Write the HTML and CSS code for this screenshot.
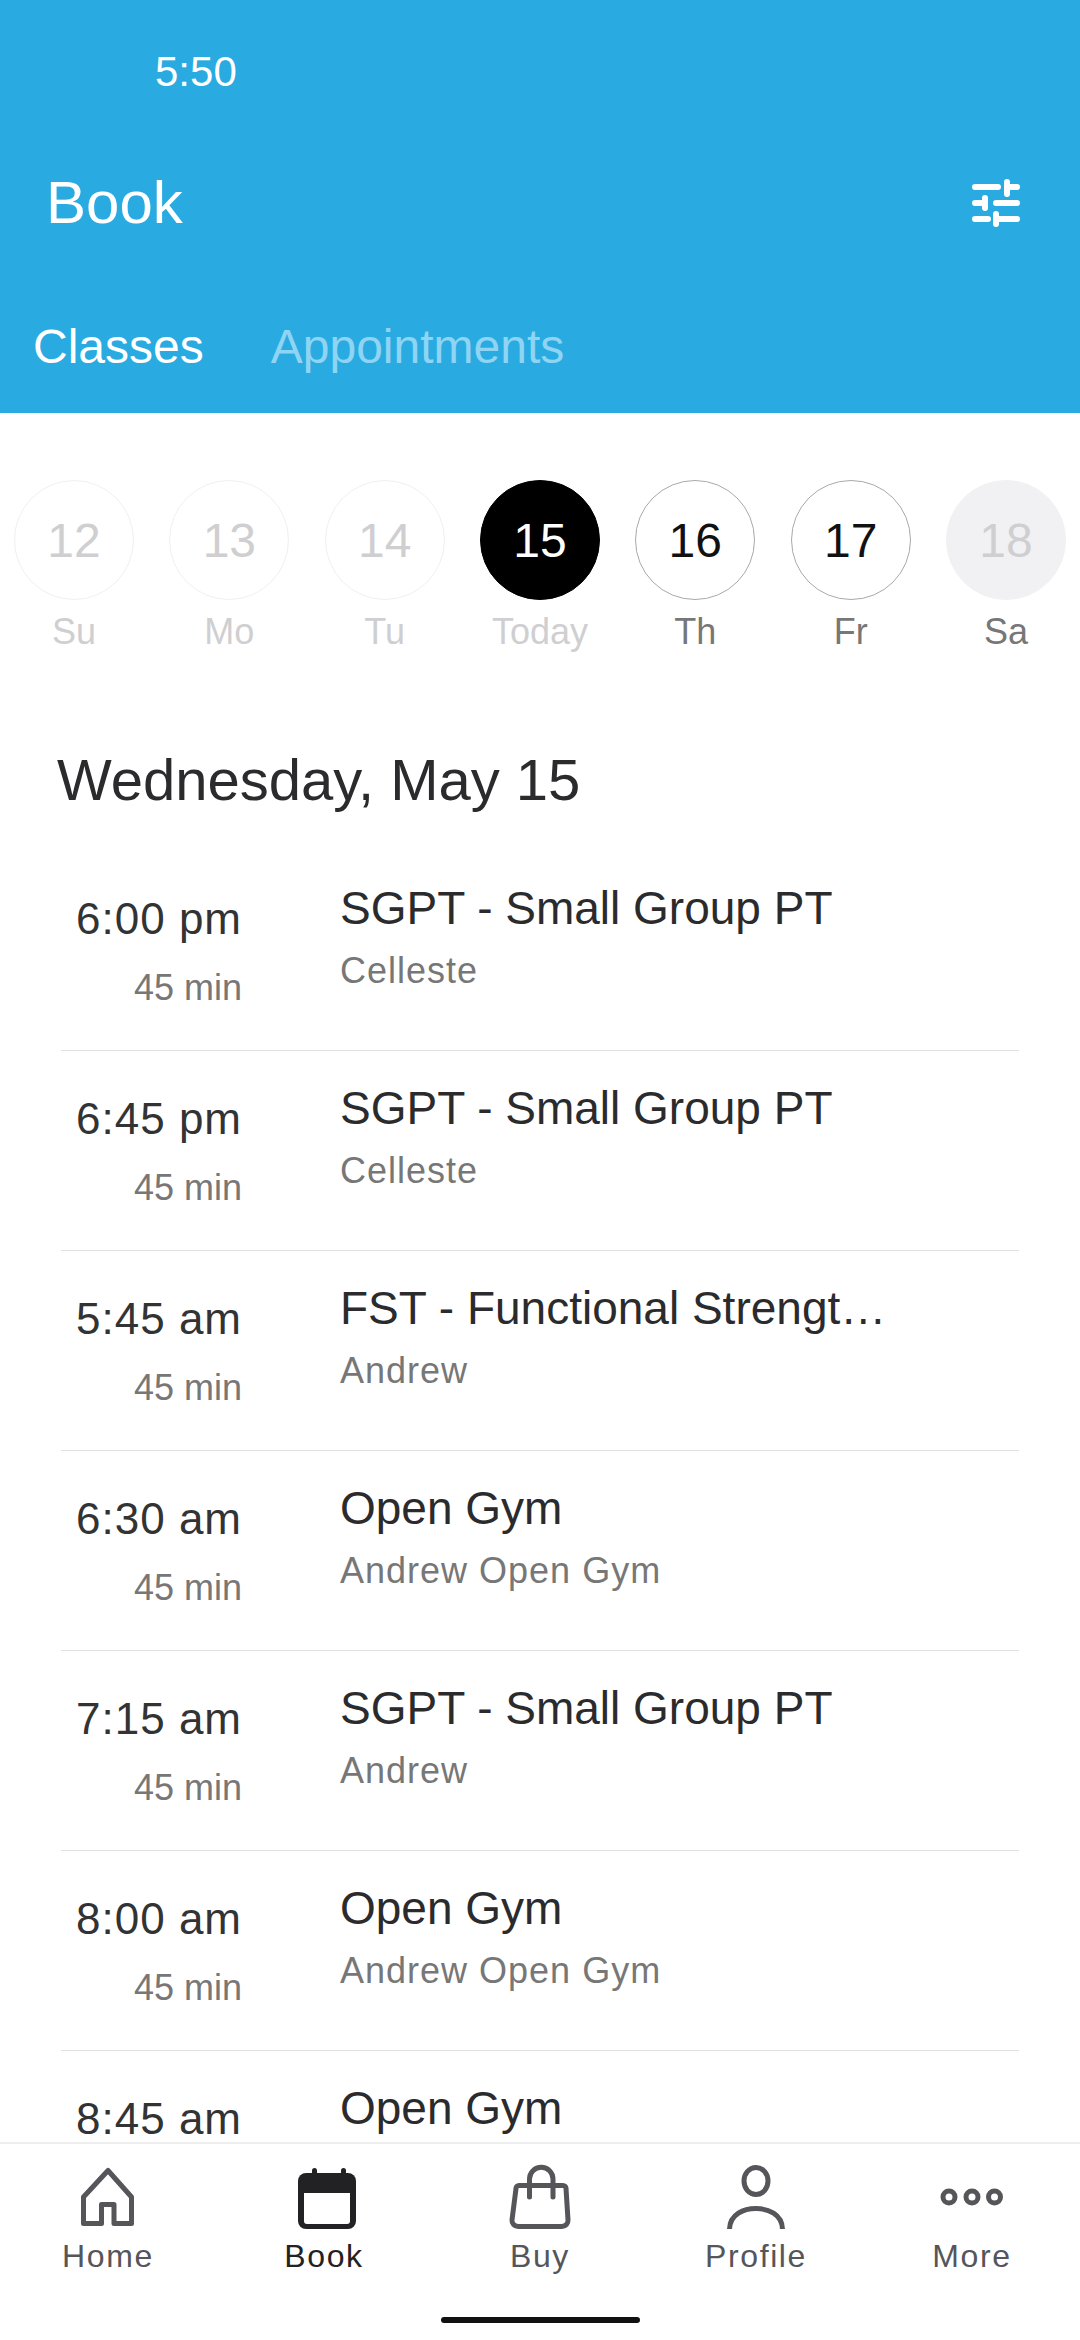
FILE: index.html
```html
<!DOCTYPE html>
<html lang="en">
<head>
<meta charset="utf-8">
<title>Book</title>
<link rel="stylesheet" href="styles.css">
</head>
<body>
<div class="app">
  <header class="header">
    <div class="status">5:50</div>
    <div class="titlebar">
      <h1 class="title">Book</h1>
      <svg class="filter" width="48" height="48" viewBox="0 0 48 48" fill="none" stroke="#fff" stroke-width="6" stroke-linecap="round">
        <path d="M3 8H26M35 3V15M35 8H45M3 24H10M13 19V29M24 24H45M3 40H16M24 35V45M24 40H45"/>
      </svg>
    </div>
    <nav class="tabs"><span class="tab active">Classes</span><span class="tab">Appointments</span></nav>
  </header>
  <section class="days">
    <div class="day past"><span class="circle">12</span><span class="dlabel">Su</span></div>
    <div class="day past"><span class="circle">13</span><span class="dlabel">Mo</span></div>
    <div class="day past"><span class="circle">14</span><span class="dlabel">Tu</span></div>
    <div class="day today"><span class="circle">15</span><span class="dlabel">Today</span></div>
    <div class="day"><span class="circle">16</span><span class="dlabel">Th</span></div>
    <div class="day"><span class="circle">17</span><span class="dlabel">Fr</span></div>
    <div class="day off"><span class="circle">18</span><span class="dlabel">Sa</span></div>
  </section>
  <h2 class="date">Wednesday, May 15</h2>
  <main class="list">
    <div class="row"><div class="time"><span class="t">6:00 pm</span><span class="d">45 min</span></div><div class="info"><span class="name">SGPT - Small Group PT</span><span class="who">Celleste</span></div></div>
    <div class="row"><div class="time"><span class="t">6:45 pm</span><span class="d">45 min</span></div><div class="info"><span class="name">SGPT - Small Group PT</span><span class="who">Celleste</span></div></div>
    <div class="row"><div class="time"><span class="t">5:45 am</span><span class="d">45 min</span></div><div class="info"><span class="name">FST - Functional Strengt…</span><span class="who">Andrew</span></div></div>
    <div class="row"><div class="time"><span class="t">6:30 am</span><span class="d">45 min</span></div><div class="info"><span class="name">Open Gym</span><span class="who">Andrew Open Gym</span></div></div>
    <div class="row"><div class="time"><span class="t">7:15 am</span><span class="d">45 min</span></div><div class="info"><span class="name">SGPT - Small Group PT</span><span class="who">Andrew</span></div></div>
    <div class="row"><div class="time"><span class="t">8:00 am</span><span class="d">45 min</span></div><div class="info"><span class="name">Open Gym</span><span class="who">Andrew Open Gym</span></div></div>
    <div class="row last"><div class="time"><span class="t">8:45 am</span></div><div class="info"><span class="name">Open Gym</span></div></div>
  </main>
  <footer class="bottom">
    <div class="navs">
      <div class="nav"><svg width="72" height="66" viewBox="0 0 72 66" fill="none" stroke="#55555a" stroke-width="5" stroke-linejoin="round"><path d="M36 6.5 11.5 33V59.5H29.5V40.5H42V59.5H59.5V33Z"/></svg><span>Home</span></div>
      <div class="nav sel"><svg width="72" height="66" viewBox="0 0 72 66"><rect x="24" y="4" width="5" height="10" rx="2.5" fill="#222225"/><rect x="53" y="4" width="5" height="10" rx="2.5" fill="#222225"/><rect x="10" y="9" width="58" height="56" rx="8" fill="#222225"/><path d="M16 29H62V57a3 3 0 0 1-3 3H19a3 3 0 0 1-3-3Z" fill="#fff"/></svg><span>Book</span></div>
      <div class="nav"><svg width="72" height="66" viewBox="0 0 72 66" fill="none" stroke="#55555a" stroke-width="5" stroke-linecap="round"><path d="M15 21.5H59a3 3 0 0 1 3 3L64 56a6 6 0 0 1-6 6.5H14a6 6 0 0 1-6-6.5L12 24.5a3 3 0 0 1 3-3Z"/><path d="M25.5 33V15a11.75 11.75 0 0 1 23.5 0V33"/></svg><span>Buy</span></div>
      <div class="nav"><svg width="72" height="66" viewBox="0 0 72 66" fill="none" stroke="#55555a" stroke-width="5"><ellipse cx="36" cy="17" rx="12" ry="13.5"/><path d="M9.5 65C10 50 24 44.5 36 44.5S62 50 62.5 65"/></svg><span>Profile</span></div>
      <div class="nav"><svg width="72" height="66" viewBox="0 0 72 66" fill="none" stroke="#55555a" stroke-width="5"><circle cx="13" cy="33" r="6"/><circle cx="36" cy="33" r="6"/><circle cx="58.5" cy="33" r="6"/></svg><span>More</span></div>
    </div>
    <div class="handle"></div>
  </footer>
</div>
</body>
</html>
```
FILE: styles.css
```css
* { box-sizing: border-box; }
html, body { margin: 0; padding: 0; }
body { font-family: "Liberation Sans", Arial, sans-serif; background: #fff; }
.app { width: 1080px; height: 2340px; position: relative; overflow: hidden; display: flex; flex-direction: column; }
.header { height: 413px; background: #29abe2; color: #fff; flex: none; }
.status { height: 144px; padding-left: 155px; font-size: 42px; line-height: 144px; }
.titlebar { display: flex; justify-content: space-between; align-items: center; height: 118px; padding: 0 60px 0 46px; }
.title { margin: 0; font-size: 60px; font-weight: 400; line-height: 70px; }
.tabs { display: flex; gap: 67px; padding: 55px 0 0 33px; font-size: 48px; line-height: 60px; }
.tab { color: #8fd5f3; }
.tab.active { color: #fff; }
.days { display: flex; justify-content: space-between; padding: 67px 14px 0; flex: none; }
.day { width: 120px; display: flex; flex-direction: column; align-items: center; }
.circle { width: 120px; height: 120px; border-radius: 50%; border: 1px solid #a9a9a9; display: flex; align-items: center; justify-content: center; font-size: 48px; color: #111; }
.dlabel { margin-top: 12px; font-size: 36px; line-height: 40px; color: #777; white-space: nowrap; }
.past .circle { border-color: #f0f0f0; color: #cfcfd1; }
.past .dlabel, .today .dlabel { color: #cfcfd1; }
.today .circle { background: #000; border-color: #000; color: #fff; }
.off .circle { background: #f1f1f3; border-color: #f1f1f3; color: #cfcfd1; }
.date { margin: 0; padding: 92px 0 0 57px; font-size: 58px; font-weight: 400; color: #2b2b2d; line-height: 72px; flex: none; }
.list { padding: 35px 61px 0; flex: 1; overflow: hidden; }
.row { display: flex; height: 200px; border-bottom: 1px solid #e2e2e2; }
.row.last { border-bottom: 0; }
.time { width: 181px; flex: none; display: flex; flex-direction: column; align-items: flex-end; }
.t { font-size: 44px; line-height: 50px; margin-top: 43px; color: #333; white-space: nowrap; letter-spacing: 1px; }
.d { font-size: 36px; line-height: 44px; margin-top: 22px; color: #777; }
.info { margin-left: 98px; display: flex; flex-direction: column; }
.name { font-size: 46px; line-height: 56px; margin-top: 29px; color: #2b2b2d; white-space: nowrap; }
.who { font-size: 36px; line-height: 44px; margin-top: 13px; color: #777; letter-spacing: 1px; }
.bottom { flex: none; height: 198px; background: #fff; border-top: 2px solid #eee; position: relative; }
.navs { display: flex; padding-top: 20px; }
.nav { flex: 1; display: flex; flex-direction: column; align-items: center; font-size: 32px; line-height: 40px; color: #55555a; letter-spacing: 1.6px; }
.nav span { margin-top: 6px; }
.nav.sel { color: #222225; }
.handle { position: absolute; left: 441px; bottom: 17px; width: 199px; height: 6px; border-radius: 3px; background: #111; }
```
